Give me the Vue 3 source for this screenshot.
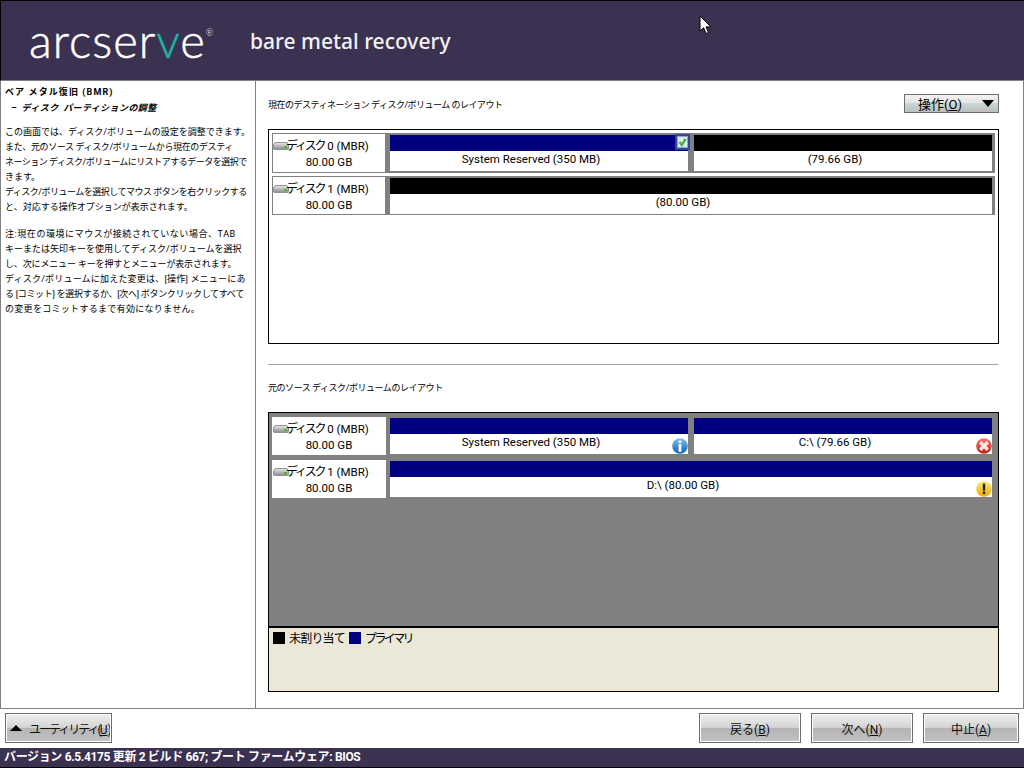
<template>
  <div class="screen">
    <header class="brand-bar">
      <div class="logo">arcser<span class="logo-v">v</span>e<sup class="logo-reg">®</sup></div>
      <div class="product">bare metal recovery</div>
      <svg class="cursor" width="13" height="20" viewBox="0 0 13 20">
        <path d="M1 1v15l3.6-3.3 2.5 5.8 2.4-1-2.5-5.6h4.9z" fill="#fff" stroke="#000" stroke-width="1" />
      </svg>
    </header>

    <main class="content">
      <aside class="help">
        <h1 class="help-title">ベア メタル復旧 (BMR)</h1>
        <h2 class="help-sub">– ディスク パーティションの調整</h2>
        <p class="help-text">
          <span v-for="line in introLines" :key="line.text" class="help-line" :style="{ letterSpacing: line.ls + 'px' }">{{ line.text }}</span>
        </p>
        <p class="help-text">
          <span v-for="line in noteLines" :key="line.text" class="help-line" :style="{ letterSpacing: line.ls + 'px' }">{{ line.text }}</span>
        </p>
      </aside>

      <section class="layouts">
        <div class="title-row">
          <span class="section-title dest-title">現在のデスティネーション ディスク/ボリューム のレイアウト</span>
          <button class="ops-btn">
            <span>操作(<u>O</u>)</span>
            <i class="ops-arrow"></i>
          </button>
        </div>

        <div class="disk-box current">
          <div v-for="disk in currentDisks" :key="disk.name" class="disk-row">
            <div class="disk-label">
              <div class="disk-name">
                <svg class="hdd" width="16" height="8" viewBox="0 0 16 8">
                  <defs>
                    <linearGradient id="hdd-a" x1="0" y1="0" x2="0" y2="1">
                      <stop offset="0" stop-color="#e8e8e8" />
                      <stop offset="1" stop-color="#8d8d8d" />
                    </linearGradient>
                  </defs>
                  <path d="M2 .5h12l1.5 2.5v3.5a1 1 0 0 1-1 1h-13a1 1 0 0 1-1-1V3z" fill="url(#hdd-a)" stroke="#808080" stroke-width=".8" />
                  <rect x="11" y="4" width="3" height="2" fill="#4fae3a" />
                </svg>
                <span><span class="disk-kana">ディスク</span> {{ disk.name }}</span>
              </div>
              <div>{{ disk.size }}</div>
            </div>
            <div class="disk-parts">
              <div v-for="part in disk.parts" :key="part.label" class="part">
                <div class="part-head" :class="part.type"></div>
                <div class="part-body">{{ part.label }}</div>
                <svg v-if="part.checked" class="check" width="15" height="16" viewBox="0 0 15 16">
                  <rect width="15" height="16" fill="#33479a" />
                  <rect x="2.5" y="2.5" width="10" height="11" fill="#dfe9f5" stroke="#8ea4c8" />
                  <path d="M4.5 8l2.3 3 3.8-6" fill="none" stroke="#3fb54a" stroke-width="2.4" />
                </svg>
              </div>
            </div>
          </div>
        </div>

        <hr class="divider">

        <div class="section-title source-title">元のソース ディスク/ボリュームのレイアウト</div>

        <div class="source-box">
          <div class="disk-box source">
            <div v-for="disk in sourceDisks" :key="disk.name" class="disk-row">
              <div class="disk-label">
                <div class="disk-name">
                  <svg class="hdd" width="16" height="8" viewBox="0 0 16 8">
                    <path d="M2 .5h12l1.5 2.5v3.5a1 1 0 0 1-1 1h-13a1 1 0 0 1-1-1V3z" fill="url(#hdd-a)" stroke="#808080" stroke-width=".8" />
                    <rect x="11" y="4" width="3" height="2" fill="#4fae3a" />
                  </svg>
                  <span><span class="disk-kana">ディスク</span> {{ disk.name }}</span>
                </div>
                <div>{{ disk.size }}</div>
              </div>
              <div class="disk-parts">
                <div v-for="part in disk.parts" :key="part.label" class="part">
                  <div class="part-head" :class="part.type"></div>
                  <div class="part-body">{{ part.label }}</div>
                  <svg v-if="part.status === 'info'" class="status" width="16" height="16" viewBox="0 0 16 16">
                    <defs>
                      <linearGradient id="st-info" x1="0" y1="0" x2="0" y2="1">
                        <stop offset="0" stop-color="#7fc0ec" />
                        <stop offset="1" stop-color="#0f62ae" />
                      </linearGradient>
                    </defs>
                    <circle cx="8" cy="8" r="7.8" fill="url(#st-info)" />
                    <circle cx="8" cy="3.8" r="1.5" fill="#fff" />
                    <rect x="6.6" y="6.2" width="2.8" height="7.6" fill="#fff" />
                  </svg>
                  <svg v-if="part.status === 'error'" class="status" width="16" height="16" viewBox="0 0 16 16">
                    <defs>
                      <linearGradient id="st-err" x1="0" y1="0" x2="0" y2="1">
                        <stop offset="0" stop-color="#ee7a70" />
                        <stop offset="1" stop-color="#c81e12" />
                      </linearGradient>
                    </defs>
                    <circle cx="8" cy="8" r="7.8" fill="url(#st-err)" />
                    <path d="M4.2 4.2l7.6 7.6M11.8 4.2l-7.6 7.6" stroke="#fbe6e4" stroke-width="3.4" />
                  </svg>
                  <svg v-if="part.status === 'warn'" class="status" width="16" height="16" viewBox="0 0 16 16">
                    <defs>
                      <linearGradient id="st-warn" x1="0" y1="0" x2="0" y2="1">
                        <stop offset="0" stop-color="#fbe97a" />
                        <stop offset="1" stop-color="#eda900" />
                      </linearGradient>
                    </defs>
                    <circle cx="8" cy="8" r="7.8" fill="url(#st-warn)" />
                    <rect x="6.8" y="2.6" width="2.4" height="7" fill="#222" />
                    <rect x="6.8" y="10.6" width="2.4" height="2.4" fill="#222" />
                  </svg>
                </div>
              </div>
            </div>
          </div>
          <div class="legend">
            <i class="swatch black"></i>
            <span class="legend-free">未割り当て</span>
            <i class="swatch navy"></i>
            <span class="legend-primary">プライマリ</span>
          </div>
        </div>
      </section>
    </main>

    <footer class="actions">
      <button class="btn util">
        <i class="up-arrow"></i>
        <span class="util-text">ユーティリティ(<u>U</u>)</span>
      </button>
      <div class="nav-btns">
        <button class="btn">戻る(<u>B</u>)</button>
        <button class="btn">次へ(<u>N</u>)</button>
        <button class="btn abort">中止(<u>A</u>)</button>
      </div>
    </footer>

    <div class="status-bar">バージョン 6.5.4175 更新 2 ビルド 667; ブート ファームウェア: BIOS</div>
  </div>
</template>

<script setup>
const introLines = [
  { text: 'この画面では、ディスク/ボリュームの設定を調整できます。', ls: 0 },
  { text: 'また、元のソース ディスク/ボリュームから現在のデスティ', ls: -0.36 },
  { text: 'ネーション ディスク/ボリュームにリストアするデータを選択で', ls: -0.5 },
  { text: 'きます。', ls: 0 },
  { text: 'ディスク/ボリュームを選択してマウス ボタンを右クリックする', ls: -0.5 },
  { text: 'と、対応する操作オプションが表示されます。', ls: 0 }
]

const noteLines = [
  { text: '注:現在の環境にマウスが接続されていない場合、TAB', ls: 0.55 },
  { text: 'キーまたは矢印キーを使用してディスク/ボリュームを選択', ls: 0 },
  { text: 'し、次にメニュー キーを押すとメニューが表示されます。', ls: -0.15 },
  { text: 'ディスク/ボリュームに加えた変更は、[操作] メニューにあ', ls: 0.2 },
  { text: 'る [コミット] を選択するか、[次へ] ボタンクリックしてすべて', ls: -0.3 },
  { text: 'の変更をコミットするまで有効になりません。', ls: 0.3 }
]

const currentDisks = [
  {
    name: '0 (MBR)',
    size: '80.00 GB',
    parts: [
      { label: 'System Reserved (350 MB)', type: 'primary', checked: true },
      { label: '(79.66 GB)', type: 'free' }
    ]
  },
  {
    name: '1 (MBR)',
    size: '80.00 GB',
    parts: [{ label: '(80.00 GB)', type: 'free' }]
  }
]

const sourceDisks = [
  {
    name: '0 (MBR)',
    size: '80.00 GB',
    parts: [
      { label: 'System Reserved (350 MB)', type: 'primary', status: 'info' },
      { label: 'C:\\ (79.66 GB)', type: 'primary', status: 'error' }
    ]
  },
  {
    name: '1 (MBR)',
    size: '80.00 GB',
    parts: [{ label: 'D:\\ (80.00 GB)', type: 'primary', status: 'warn' }]
  }
]
</script>

<style scoped>
.screen {
  width: 1024px;
  height: 768px;
  display: flex;
  flex-direction: column;
  overflow: hidden;
  background: #fff;
  color: #000;
  font-family: Roboto, "Noto Sans CJK JP", sans-serif;
  font-size: 12px;
}

.brand-bar {
  position: relative;
  height: 81px;
  flex: none;
  box-sizing: border-box;
  display: flex;
  align-items: center;
  background: #3b3150;
  border-top: 1px solid #000;
  border-left: 1px solid #000;
  border-bottom: 1px solid #808080;
  color: #fff;
}

.logo {
  margin-left: 28px;
  width: 221px;
  font-family: Lato, sans-serif;
  font-weight: 300;
  font-size: 47px;
  line-height: 1;
  letter-spacing: 1px;
  -webkit-text-stroke: 0.5px #fff;
  white-space: nowrap;
}

.logo-v {
  color: #1db3a4;
  -webkit-text-stroke: 0.5px #1db3a4;
}

.logo-reg {
  font-size: 9px;
  vertical-align: 22px;
  line-height: 0;
  letter-spacing: 0;
  -webkit-text-stroke: 0;
}

.product {
  font-family: "Noto Sans", sans-serif;
  font-size: 21px;
  font-weight: 500;
  color: #f2f1f4;
}

.cursor {
  position: absolute;
  left: 698px;
  top: 14px;
}

.content {
  flex: 1;
  min-height: 0;
  display: flex;
  box-sizing: border-box;
  border-left: 1px solid #808080;
  border-right: 1px solid #808080;
  border-bottom: 1px solid #808080;
}

.help {
  width: 255px;
  flex: none;
  box-sizing: border-box;
  padding: 3px 0 0 4px;
  border-right: 1px solid #808080;
  font-size: 9px;
  line-height: 15px;
}

.help-title {
  margin: 0;
  font-size: 9px;
  font-weight: 700;
  line-height: 16px;
  letter-spacing: 1.1px;
}

.help-sub {
  margin: 0 0 9px 6px;
  font-size: 9px;
  font-weight: 700;
  font-style: italic;
  line-height: 16px;
  letter-spacing: 0.4px;
  word-spacing: 2px;
}

.help-text {
  margin: 0 0 12px;
  white-space: nowrap;
}

.help-line {
  display: block;
}

.layouts {
  flex: 1;
  min-width: 0;
  box-sizing: border-box;
  padding: 13px 24px 0 12px;
}

.title-row {
  display: flex;
  justify-content: space-between;
  align-items: center;
  height: 19px;
  margin-bottom: 16px;
}

.section-title {
  font-size: 9px;
  letter-spacing: -0.45px;
}

.dest-title {
  padding-top: 1px;
  letter-spacing: -0.5px;
}

.ops-btn {
  width: 95px;
  height: 19px;
  box-sizing: border-box;
  display: flex;
  align-items: center;
  justify-content: space-between;
  padding: 0 4px 0 13px;
  border: 1px solid #6e6e6e;
  background: linear-gradient(#f2f2f2 0, #e4e4e4 48%, #c8d8d4 50%, #bdbdbd 100%);
  font: inherit;
  font-size: 13px;
  color: #000;
}

.ops-arrow {
  width: 0;
  height: 0;
  border-left: 6px solid transparent;
  border-right: 6px solid transparent;
  border-top: 7px solid #000;
}

.disk-box.current {
  height: 215px;
  box-sizing: border-box;
  padding: 3px 3px 0 3px;
  border: 1px solid #000;
}

.disk-row {
  display: flex;
}

.current .disk-row + .disk-row {
  margin-top: 3px;
}

.current .disk-row:last-child .disk-parts {
  padding-bottom: 1px;
}

.disk-label {
  width: 114px;
  flex: none;
  box-sizing: border-box;
  border: 1px solid #808080;
  background: #fff;
  text-align: center;
  font-size: 11.5px;
  line-height: 16px;
  padding-top: 4px;
}

.disk-name {
  display: flex;
  align-items: center;
  white-space: nowrap;
}

.disk-kana {
  font-size: 12px;
  letter-spacing: -2.2px;
}

.hdd {
  flex: none;
  margin-right: -3px;
}

.disk-parts {
  flex: 1;
  min-width: 0;
  display: flex;
  gap: 6px;
  box-sizing: border-box;
  padding: 2px 3px 2px 4px;
  background: #808080;
}

.part {
  position: relative;
  flex: 1;
  min-width: 0;
}

.part-head {
  height: 16px;
}

.part-head.primary {
  background: #000080;
}

.part-head.free {
  background: #000;
}

.part-body {
  height: 20px;
  box-sizing: border-box;
  padding-right: 16px;
  background: #fff;
  text-align: center;
  font-size: 11.5px;
  line-height: 16px;
}

.check {
  position: absolute;
  top: -1px;
  right: -2px;
}

.status {
  position: absolute;
  right: 0;
  bottom: 0;
}

.divider {
  height: 1px;
  margin: 20px 1px 0 0;
  border: 0;
  background: #a0a0a0;
}

.source-title {
  margin-top: 15px;
  line-height: 16px;
}

.source-box {
  height: 280px;
  margin-top: 16px;
  box-sizing: border-box;
  display: flex;
  flex-direction: column;
  border: 1px solid #000;
}

.disk-box.source {
  height: 213px;
  flex: none;
  box-sizing: border-box;
  padding: 4px 3px 0;
  background: #808080;
}

.source .disk-row + .disk-row {
  margin-top: 5px;
}

.source .disk-label {
  border: 0;
  padding: 4px 1px 0;
}

.source .disk-parts {
  padding-top: 1px;
  padding-bottom: 1px;
}

.legend {
  flex: 1;
  display: flex;
  align-items: flex-start;
  gap: 4px;
  box-sizing: border-box;
  padding: 4px 0 0 4px;
  border-top: 2px solid #000;
  background: #ebe8d8;
  line-height: 14px;
}

.legend-free {
  letter-spacing: -0.8px;
}

.legend-primary {
  letter-spacing: -2.6px;
}

.swatch {
  width: 12px;
  height: 12px;
  flex: none;
}

.swatch.black {
  background: #000;
}

.swatch.navy {
  background: #000080;
}

.actions {
  height: 39px;
  flex: none;
  display: flex;
  justify-content: space-between;
  align-items: flex-start;
  box-sizing: border-box;
  padding: 4px 5px 0 5px;
}

.nav-btns {
  display: flex;
  gap: 10px;
}

.btn {
  width: 102px;
  height: 30px;
  box-sizing: border-box;
  padding: 0;
  border: 1px solid #6e6e6e;
  outline: 1px solid #fff;
  outline-offset: -2px;
  background: linear-gradient(#f0f0f0 0, #d4d4d4 48%, #b4b4b4 50%, #c2c2c2 100%);
  font: inherit;
  color: #111;
}

.btn.abort {
  width: 96px;
}

.btn.util {
  width: 107px;
  display: flex;
  align-items: center;
  gap: 7px;
  padding-left: 4px;
}

.util-text {
  white-space: nowrap;
  letter-spacing: -2px;
}

.util-text u {
  letter-spacing: 0;
}

.up-arrow {
  width: 0;
  height: 0;
  border-left: 6.5px solid transparent;
  border-right: 6.5px solid transparent;
  border-bottom: 6px solid #000;
}

.status-bar {
  height: 20px;
  flex: none;
  box-sizing: border-box;
  padding-left: 4px;
  background: #3b3150;
  color: #fff;
  font-weight: 700;
  font-size: 12px;
  line-height: 19px;
  letter-spacing: -0.35px;
  white-space: nowrap;
  border-bottom: 1px solid #000;
}
</style>
